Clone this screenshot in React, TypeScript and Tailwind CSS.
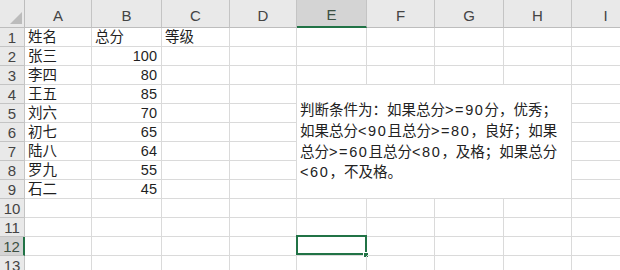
import React from 'react';

const columns = ['A', 'B', 'C', 'D', 'E', 'F', 'G', 'H', 'I'];

// [name, score, grade]
const rows: string[][] = [
  ['姓名', '总分', '等级'],
  ['张三', '100'],
  ['李四', '80'],
  ['王五', '85'],
  ['刘六', '70'],
  ['初七', '65'],
  ['陆八', '64'],
  ['罗九', '55'],
  ['石二', '45'],
  [],
  [],
  [],
  [],
];

const noteLines = [
  '判断条件为：如果总分>=90分，优秀；',
  '如果总分<90且总分>=80，良好；如果',
  '总分>=60且总分<80，及格；如果总分',
  '<60，不及格。',
];

// cells E4:H9 sit under the text box
const underBox = (row: number, col: number) => row >= 4 && row <= 9 && col >= 4 && col <= 7;

// half-width runs are a little wider in the original font
const NoteLine: React.FC<{ text: string }> = ({ text }) => (
  <div className="whitespace-nowrap">
    {text.split(/([<>=0-9]+)/).map((part, i) =>
      /^[<>=0-9]+$/.test(part) ? (
        <span key={i} className="tracking-[1.6px]">
          {part}
        </span>
      ) : (
        <span key={i}>{part}</span>
      )
    )}
  </div>
);

const App: React.FC = () => {
  return (
    <div
      className="w-[620px] h-[270px] overflow-hidden bg-white text-[#1f1f1f]"
      style={{ fontFamily: '"Liberation Sans", "Noto Sans CJK SC", sans-serif' }}
    >
      <div className="grid grid-cols-[25px_67px_70px_68px_67px_70px_68px_69px_68px_68px] grid-rows-[28px_repeat(13,19px)]">
        {/* Corner */}
        <div className="relative bg-[#e9e9e9] border-r border-b border-[#bdbdbd]">
          <svg className="absolute left-[10px] top-[12px]" width="13" height="13" viewBox="0 0 13 13">
            <polygon points="12,0 12,12 0,12" fill="#bcbcbc" />
          </svg>
        </div>

        {/* Column headers */}
        {columns.map((c) =>
          c === 'E' ? (
            <div
              key={c}
              className="flex items-end justify-center pb-[3px] bg-[#d4d4d4] border-r border-[#c4c4c4] border-b-2 border-b-[#217346] text-[15px] leading-[16px] text-[#3b4f42]"
            >
              {c}
            </div>
          ) : (
            <div
              key={c}
              className="flex items-end justify-center pb-[3px] bg-[#e9e9e9] border-r border-b border-[#c4c4c4] border-b-[#bdbdbd] text-[15px] leading-[16px] text-[#444]"
            >
              {c}
            </div>
          )
        )}

        {rows.map((r, ri) => {
          const rowNo = ri + 1;
          const selected = rowNo === 12;
          return (
            <React.Fragment key={rowNo}>
              <div
                className={
                  selected
                    ? 'flex items-center justify-center bg-[#d4d4d4] border-r-2 border-r-[#217346] border-b border-[#c4c4c4] text-[15px] leading-none text-[#3b4f42]'
                    : 'flex items-center justify-center bg-[#e9e9e9] border-r border-b border-[#c4c4c4] text-[15px] leading-none text-[#444]'
                }
              >
                {rowNo}
              </div>
              {columns.map((c, ci) => {
                if (underBox(rowNo, ci)) {
                  if (rowNo === 4 && ci === 4) {
                    return (
                      <div
                        key={c}
                        className="col-span-4 row-span-6 flex items-center bg-white border-r border-b border-[#dadada] pl-[3px] text-[14.5px] leading-[20.7px] text-[#222]"
                      >
                        <div>
                          {noteLines.map((l, i) => (
                            <NoteLine key={i} text={l} />
                          ))}
                        </div>
                      </div>
                    );
                  }
                  return null;
                }
                const value = r[ci];
                const numeric = value !== undefined && /^\d+$/.test(value);
                return (
                  <div
                    key={c}
                    className={
                      'relative flex items-center border-r border-b border-[#dadada] text-[14.5px] leading-none whitespace-nowrap ' +
                      (numeric ? 'justify-end pr-[4px]' : 'pl-[3px]')
                    }
                  >
                    {value}
                    {selected && c === 'E' && (
                      <>
                        <div className="absolute left-[-1px] top-[-2px] right-[-1px] bottom-0 border-2 border-[#217346]" />
                        <div className="absolute right-[-3px] bottom-[-3px] w-[6px] h-[6px] bg-[#217346] border border-white" />
                      </>
                    )}
                  </div>
                );
              })}
            </React.Fragment>
          );
        })}
      </div>
    </div>
  );
};

export default App;
